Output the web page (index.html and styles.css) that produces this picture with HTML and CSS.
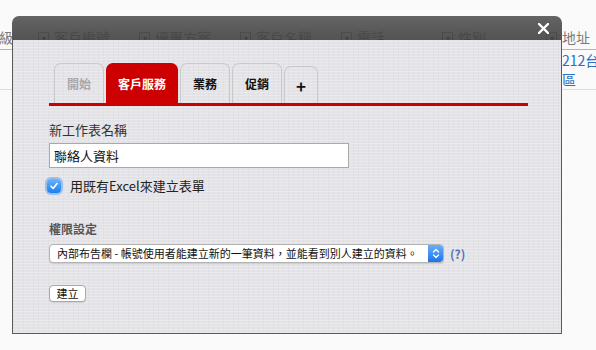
FILE: index.html
```html
<!DOCTYPE html>
<html lang="zh-Hant">
<head>
    <meta charset="UTF-8">
    <title>新增工作表</title>
    <link rel="stylesheet" href="styles.css">
</head>
<body>
    <div class="page">
        <div class="grid-head">
            <div class="cell first">級</div>
            <div class="cell"><span class="sort">▾</span>客戶編號</div>
            <div class="cell"><span class="sort">▾</span>優惠方案</div>
            <div class="cell"><span class="sort">▾</span>客戶名稱</div>
            <div class="cell"><span class="sort">▾</span>電話</div>
            <div class="cell"><span class="sort">▾</span>性別</div>
            <div class="cell last"><span class="sort">▾</span>地址</div>
        </div>
        <div class="grid-row">
            <div class="addr">
                <div>212台</div>
                <div>區</div>
            </div>
        </div>
    </div>

    <div class="dialog">
        <div class="dialog-head">
            <span class="close">
                <svg width="11" height="11" viewBox="0 0 11 11"><path d="M1 1L10 10M10 1L1 10" stroke="#fff" stroke-width="2.4" stroke-linecap="round"/></svg>
            </span>
        </div>
        <div class="dialog-body">
            <div class="tabs">
                <div class="tab disabled">開始</div>
                <div class="tab active">客戶服務</div>
                <div class="tab">業務</div>
                <div class="tab">促銷</div>
                <div class="tab add">+</div>
            </div>

            <div class="field-label">新工作表名稱</div>
            <div class="text-input">聯絡人資料</div>
            <div class="check-row">
                <span class="checkbox">
                    <svg width="10" height="10" viewBox="0 0 10 10"><path d="M2 5.2L4.2 7.4L8 2.6" fill="none" stroke="#fff" stroke-width="1.6" stroke-linecap="round" stroke-linejoin="round"/></svg>
                </span>
                <span>用既有Excel來建立表單</span>
            </div>

            <div class="section-label">權限設定</div>
            <div class="select-row">
                <div class="select">
                    <span class="select-text">內部布告欄 - 帳號使用者能建立新的一筆資料，並能看到別人建立的資料。</span>
                    <span class="select-arrows">
                        <svg width="8" height="11" viewBox="0 0 8 11"><path d="M1.5 4L4 1.5L6.5 4M1.5 7L4 9.5L6.5 7" fill="none" stroke="#fff" stroke-width="1.3" stroke-linecap="round" stroke-linejoin="round"/></svg>
                    </span>
                </div>
                <span class="help">(?)</span>
            </div>

            <div class="btn">建立</div>
        </div>
    </div>
</body>
</html>
```

FILE: styles.css
```css
body {
    margin: 0;
    background-color: #fafafa;
    font-family: "Noto Sans CJK TC", "Liberation Sans", sans-serif;
    overflow: hidden;
}
.page {
    padding-top: 26px;
}
.grid-head {
    display: flex;
    height: 23px;
    border-bottom: 1px solid #b4b4b4;
    color: #7a7a7a;
    font-size: 14px;
    line-height: 23px;
    white-space: nowrap;
}
.cell {
    width: 101px;
    flex-shrink: 0;
    display: flex;
    align-items: center;
    gap: 5px;
}
.cell.first {
    width: 39px;
    margin-left: -1px;
}
.cell.last {
    width: 49px;
    margin-left: 3px;
}
.sort {
    width: 9px;
    height: 9px;
    border: 1px solid #8a8a8a;
    font-size: 8px;
    line-height: 9px;
    text-align: center;
    color: #555;
}
.grid-row {
    display: flex;
    justify-content: flex-end;
    min-height: 37px;
    border-bottom: 1px solid #ddd;
}
.addr {
    width: 34px;
    padding-top: 1px;
    color: #2a6fc2;
    font-size: 14px;
    line-height: 19px;
    white-space: nowrap;
}

/* modal window */
.dialog {
    position: absolute;
    left: 12px;
    top: 16px;
    width: 550px;
}
.dialog-head {
    height: 24px;
    border-radius: 7px 7px 0 0;
    background: linear-gradient(to bottom, rgba(88, 88, 88, 0.93), rgba(60, 60, 60, 0.88));
    display: flex;
    justify-content: flex-end;
    align-items: center;
    padding-right: 13px;
}
.close {
    display: flex;
}
.dialog-body {
    height: 270px;
    border: 1px solid #5a5a5a;
    border-top: none;
    padding: 23px 33px 0 36px;
    background-color: #e4e4e8;
    background-image:
        repeating-linear-gradient(0deg, rgba(255, 255, 255, 0.22) 0 1px, transparent 1px 3px),
        repeating-linear-gradient(90deg, rgba(0, 0, 0, 0.025) 0 1px, transparent 1px 5px);
}
.tabs {
    display: flex;
    align-items: flex-end;
    gap: 2px;
    padding-left: 5px;
    border-bottom: 3px solid #cc0000;
    width: 474px;
}
.tab {
    height: 39px;
    border: 1px solid #c9c9c9;
    border-bottom: none;
    border-radius: 7px 7px 0 0;
    font-size: 12px;
    font-weight: bold;
    color: #111;
    display: flex;
    align-items: center;
    justify-content: center;
    width: 48px;
}
.tab.disabled {
    color: #a8a8a8;
}
.tab.active {
    background-color: #cc0000;
    border-color: #cc0000;
    color: #fff;
    width: 70px;
}
.tab.add {
    width: 32px;
    height: 36px;
    font-size: 17px;
}
.field-label {
    margin-top: 15px;
    font-size: 13px;
    color: #333;
    line-height: 18px;
}
.text-input {
    margin-top: 4px;
    width: 294px;
    height: 23px;
    border: 1px solid #a9a9a9;
    background-color: #fff;
    padding-left: 4px;
    font-size: 13px;
    line-height: 23px;
    color: #111;
}
.check-row {
    display: flex;
    align-items: center;
    gap: 9px;
    margin-top: 8px;
    margin-left: -2px;
    font-size: 13px;
    color: #222;
}
.checkbox {
    width: 14px;
    height: 14px;
    border-radius: 4px;
    background: linear-gradient(to bottom, #6cb3fb, #1a7ff0);
    box-shadow: 0 0 0 2px rgba(110, 165, 240, 0.6);
    display: flex;
    align-items: center;
    justify-content: center;
}
.section-label {
    margin-top: 26px;
    font-size: 12px;
    font-weight: bold;
    color: #555;
    line-height: 16px;
}
.select-row {
    display: flex;
    align-items: center;
    gap: 6px;
    margin-top: 7px;
}
.select {
    width: 393px;
    height: 17px;
    display: flex;
    justify-content: space-between;
    border: 1px solid #b3b3b3;
    border-radius: 4px;
    background-color: #fff;
    box-shadow: 0 1px 1px rgba(0, 0, 0, 0.12);
    overflow: hidden;
}
.select-text {
    padding-left: 7px;
    font-size: 11px;
    line-height: 17px;
    color: #111;
    white-space: nowrap;
}
.select-arrows {
    width: 15px;
    background: linear-gradient(to bottom, #6aaefa, #1c74ec);
    display: flex;
    align-items: center;
    justify-content: center;
    border-radius: 0 3px 3px 0;
}
.help {
    font-size: 12px;
    font-weight: bold;
    color: #4c73b3;
}
.btn {
    margin-top: 22px;
    width: 35px;
    height: 15px;
    border: 1px solid #a8a8a8;
    border-radius: 4px;
    background-color: #fff;
    box-shadow: 0 1px 1px rgba(0, 0, 0, 0.1);
    font-size: 11px;
    line-height: 15px;
    text-align: center;
    color: #111;
}
```
